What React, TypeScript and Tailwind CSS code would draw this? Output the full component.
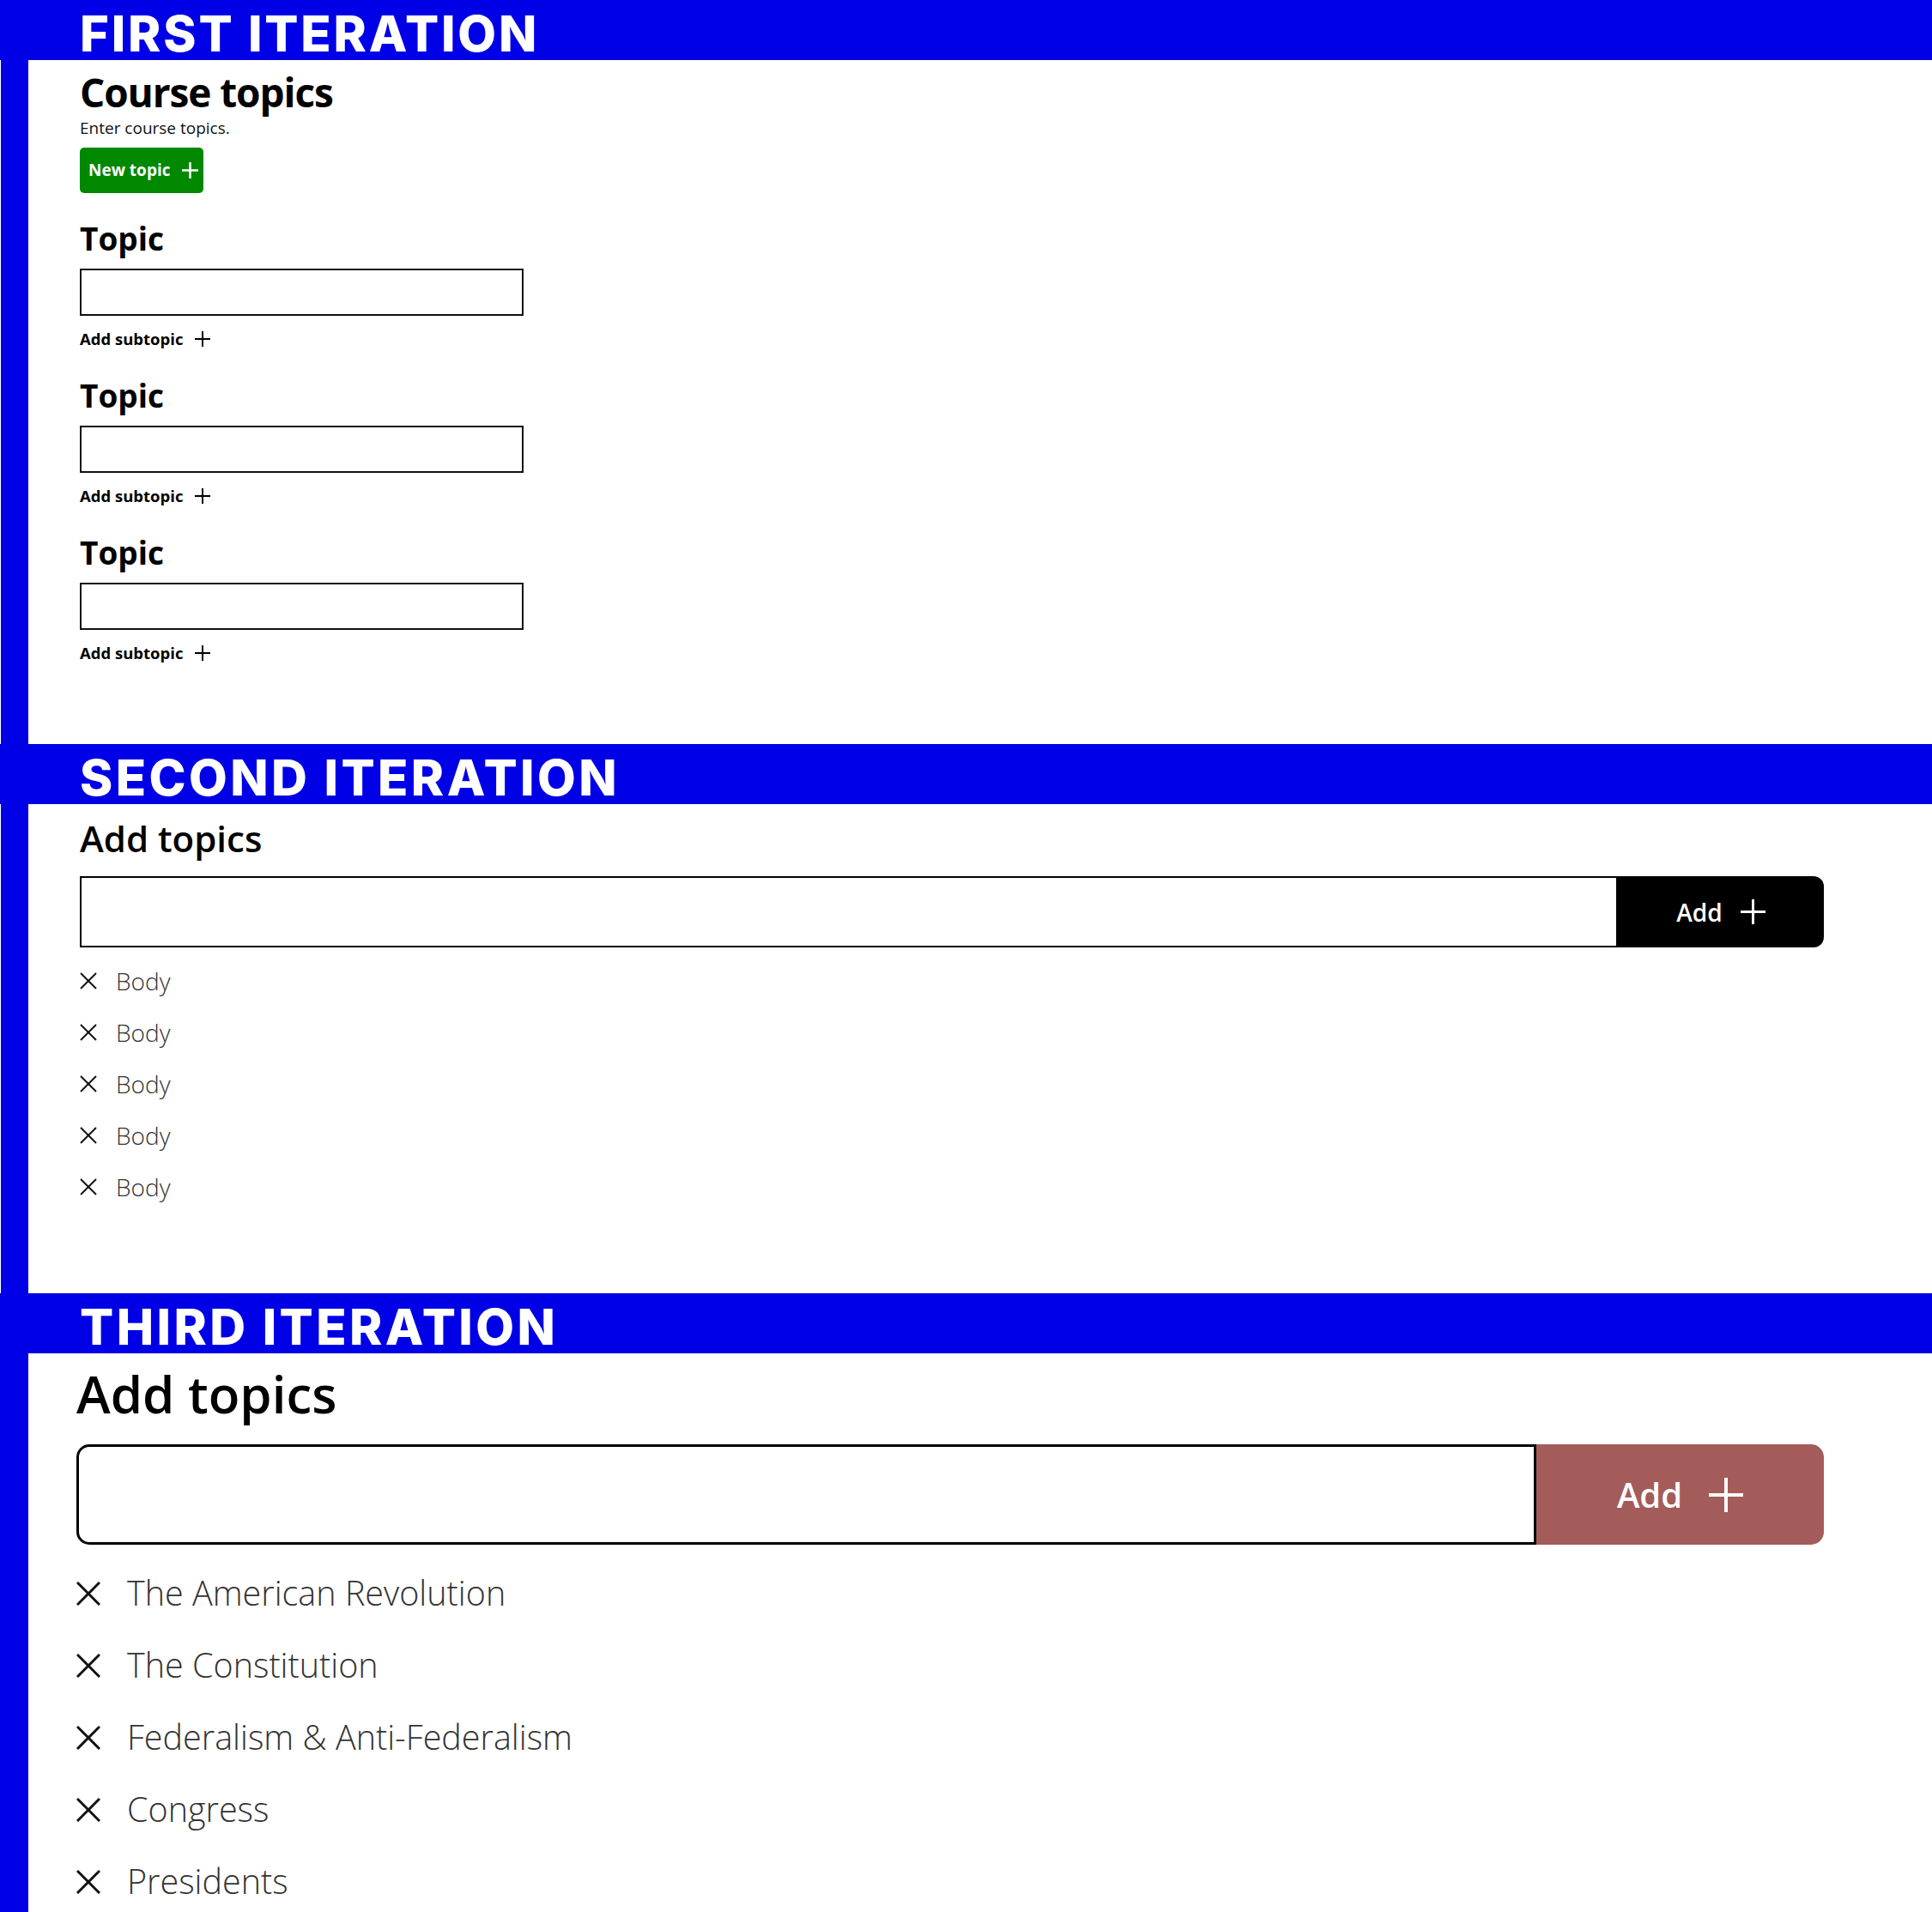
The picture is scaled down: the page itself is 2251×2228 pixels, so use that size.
import React from "react";

function PlusIcon({ size, stroke, className }: { size: number; stroke: number; className?: string }) {
  return (
    <svg width={size} height={size} viewBox={`0 0 ${size} ${size}`} className={className} aria-hidden="true">
      <line x1={size / 2} y1={0} x2={size / 2} y2={size} stroke="currentColor" strokeWidth={stroke} />
      <line x1={0} y1={size / 2} x2={size} y2={size / 2} stroke="currentColor" strokeWidth={stroke} />
    </svg>
  );
}

function XIcon({ size, stroke, className }: { size: number; stroke: number; className?: string }) {
  return (
    <svg width={size} height={size} viewBox={`0 0 ${size} ${size}`} className={className} aria-hidden="true">
      <line x1={1} y1={1} x2={size - 1} y2={size - 1} stroke="currentColor" strokeWidth={stroke} />
      <line x1={size - 1} y1={1} x2={1} y2={size - 1} stroke="currentColor" strokeWidth={stroke} />
    </svg>
  );
}

function Band({ title, tight }: { title: string; tight?: boolean }) {
  return (
    <div className="flex h-[70px] items-start bg-[#0000e6] pl-[93px] pt-[10px]">
      <h1
        className={
          tight
            ? "font-['Inter',sans-serif] text-[58px] font-extrabold leading-[58px] tracking-[2.8px] whitespace-nowrap text-white"
            : "font-['Inter',sans-serif] text-[58px] font-extrabold leading-[58px] tracking-[3.4px] whitespace-nowrap text-white"
        }
      >
        {title}
      </h1>
    </div>
  );
}

function TopicBlock({ first }: { first?: boolean }) {
  return (
    <div className={first ? "mt-[34px]" : "mt-[38px]"}>
      <h3 className="h-[37px] text-[37px] font-bold leading-none text-black">Topic</h3>
      <div className="mt-[17px] h-[55px] w-[517px] border-2 border-[#111]" />
      <div className="mt-[18px] flex h-[18px] items-center gap-[14px]">
        <span className="text-[18.5px] font-bold leading-none text-black">Add subtopic</span>
        <PlusIcon size={18} stroke={2} className="text-black" />
      </div>
    </div>
  );
}

const secondItems = ["Body", "Body", "Body", "Body", "Body"];
const thirdItems = [
  "The American Revolution",
  "The Constitution",
  "Federalism & Anti-Federalism",
  "Congress",
  "Presidents",
];

export default function App() {
  return (
    <div className="w-[2251px] bg-white font-['Open_Sans',sans-serif] text-black">
      {/* FIRST ITERATION */}
      <Band title="FIRST ITERATION" tight />
      <div className="flex h-[797px]">
        <div className="w-[33px] shrink-0 border-l border-white bg-[#0000e6]" />
        <div className="flex-1 pl-[60px]">
          <h2 className="mt-[14px] h-[46px] text-[46px] font-bold leading-none tracking-[-1.1px]">Course topics</h2>
          <p className="mt-[10px] h-[19px] text-[19px] leading-none text-[#111]">Enter course topics.</p>
          <button className="mt-[13px] flex h-[53px] w-[144px] items-center gap-[14px] rounded-[5px] bg-[#008800] pl-[10px] text-white">
            <span className="text-[19px] font-bold leading-none">New topic</span>
            <PlusIcon size={19} stroke={2.5} />
          </button>
          <TopicBlock first />
          <TopicBlock />
          <TopicBlock />
        </div>
      </div>

      {/* SECOND ITERATION */}
      <Band title="SECOND ITERATION" />
      <div className="flex h-[570px]">
        <div className="w-[33px] shrink-0 border-l border-white bg-[#0000e6]" />
        <div className="flex-1 pl-[60px] pr-[126px]">
          <h2 className="mt-[19px] h-[42px] text-[42px] font-semibold leading-none">Add topics</h2>
          <div className="mt-[23px] flex h-[83px]">
            <div className="flex-1 border-2 border-black" />
            <button className="flex w-[240px] items-center justify-center gap-[21px] rounded-r-[12px] bg-black text-white">
              <span className="text-[28px] font-semibold leading-none">Add</span>
              <PlusIcon size={29} stroke={3} />
            </button>
          </div>
          <ul className="mt-[9px]">
            {secondItems.map((t, i) => (
              <li key={i} className="flex h-[60px] items-center gap-[22px]">
                <XIcon size={20} stroke={2} className="text-[#111]" />
                <span className="text-[28px] font-light leading-none text-[#333]">{t}</span>
              </li>
            ))}
          </ul>
        </div>
      </div>

      {/* THIRD ITERATION */}
      <Band title="THIRD ITERATION" />
      <div className="flex">
        <div className="w-[33px] shrink-0 bg-[#0000e6]" />
        <div className="flex-1 pl-[56px] pr-[126px]">
          <h2 className="mt-[17px] h-[60px] text-[60px] font-semibold leading-none">Add topics</h2>
          <div className="mt-[29px] flex h-[117px]">
            <div className="flex-1 rounded-l-[15px] border-[3px] border-black" />
            <button className="flex w-[335px] items-center justify-center gap-[31px] rounded-r-[15px] bg-[#a45c5a] text-white">
              <span className="text-[40px] font-semibold leading-none">Add</span>
              <PlusIcon size={40} stroke={4} />
            </button>
          </div>
          <ul className="mt-[15px]">
            {thirdItems.map((t, i) => (
              <li key={i} className="flex h-[84px] items-center gap-[31px]">
                <XIcon size={28} stroke={3} className="text-[#111]" />
                <span className="text-[39.5px] font-light leading-none text-[#333]">{t}</span>
              </li>
            ))}
          </ul>
        </div>
      </div>
    </div>
  );
}
